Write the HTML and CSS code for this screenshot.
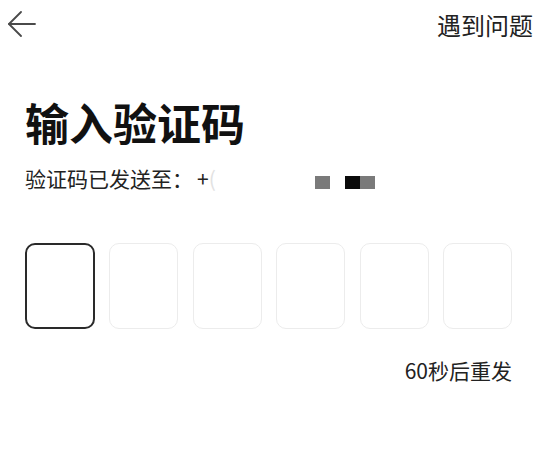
FILE: index.html
```html
<!DOCTYPE html>
<html lang="zh-CN">
<head>
  <meta charset="UTF-8">
  <title>输入验证码</title>
  <link rel="stylesheet" href="styles.css">
</head>
<body>
  <div class="page">
    <!-- top bar -->
    <div class="top-bar">
      <span class="back-btn">
        <svg width="28" height="28" viewBox="0 0 28 28" fill="none" stroke="#4a4a4a" stroke-width="1.8" stroke-linecap="round" stroke-linejoin="round">
          <path d="M1 13 H27"/>
          <path d="M13 1 L1 13 L13 25"/>
        </svg>
      </span>
      <span class="help-link">遇到问题</span>
    </div>

    <div class="main">
      <div class="title">输入验证码</div>
      <div class="sent-to">
        验证码已发送至：<span class="phone">+<span class="blur-digit">(</span></span>
        <span class="mask">
          <span class="px gray"></span>
          <span class="px gap"></span>
          <span class="px black"></span>
          <span class="px gray"></span>
        </span>
      </div>

      <div class="code-boxes">
        <div class="code-box active"></div>
        <div class="code-box"></div>
        <div class="code-box"></div>
        <div class="code-box"></div>
        <div class="code-box"></div>
        <div class="code-box"></div>
      </div>

      <div class="resend">60秒后重发</div>
    </div>
  </div>
</body>
</html>
```

FILE: styles.css
```css
body {
  margin: 0;
  background: #fff;
  font-family: "Noto Sans CJK SC", "Noto Sans", sans-serif;
  color: #1a1a1a;
}
.page {
  width: 535px;
  height: 460px;
  overflow: hidden;
}
.top-bar {
  display: flex;
  justify-content: space-between;
  align-items: center;
  padding: 8px 2px 0 8px;
  height: 36px;
}
.back-btn {
  display: flex;
  width: 28px;
  height: 28px;
  margin-top: -2px;
}
.help-link {
  font-size: 24px;
  line-height: 30px;
  color: #222;
  margin-top: -2px;
}
.main {
  padding: 51px 23px 0 25px;
}
.title {
  font-size: 44px;
  font-weight: 700;
  line-height: 54px;
  color: #111;
}
.sent-to {
  display: flex;
  align-items: center;
  margin-top: 15px;
  font-size: 21px;
  line-height: 28px;
  color: #222;
}
.phone {
  margin-left: 4px;
}
.blur-digit {
  color: #e2e2e2;
}
.mask {
  display: flex;
  margin-left: 99px;
  margin-top: 8px;
}
.px {
  width: 15px;
  height: 13px;
}
.px.gray {
  background: #7a7a7a;
}
.px.black {
  background: #0a0a0a;
}
.px.gap {
  background: transparent;
}
.code-boxes {
  display: flex;
  justify-content: space-between;
  margin-top: 51px;
}
.code-box {
  width: 67px;
  height: 84px;
  border: 1px solid #ececec;
  border-radius: 10px;
}
.code-box.active {
  width: 66px;
  height: 82px;
  border: 2px solid #2a2a2a;
}
.resend {
  text-align: right;
  margin-top: 27px;
  font-size: 21px;
  line-height: 28px;
  color: #222;
}
```
